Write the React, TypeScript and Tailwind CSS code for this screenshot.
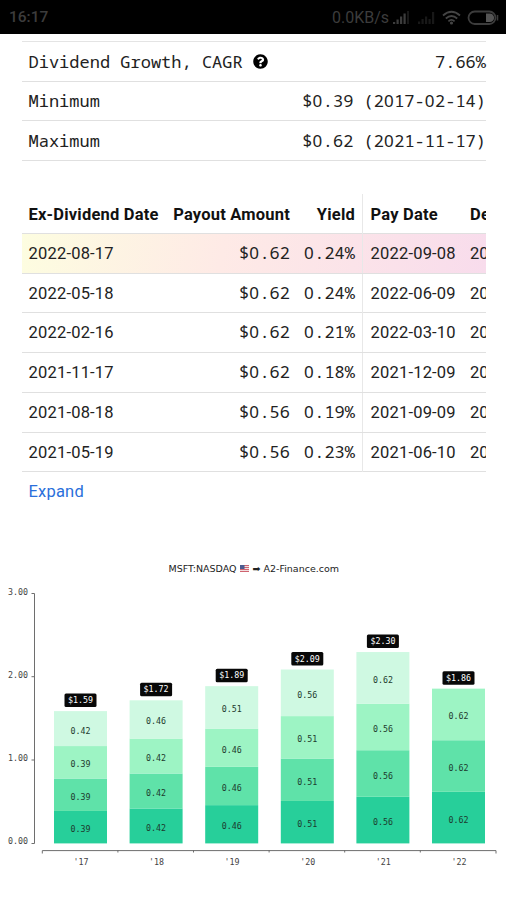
import React from "react";

const MONO = "font-['Noto_Sans_Mono','Noto_Sans_Mono_CJK_SC','Liberation_Mono',monospace]";

// Zeros use the proportional face, spaced to the mono advance, so they carry no slash or dot.
function Mono({ children }: { children: string }) {
  return (
    <span className={`${MONO} text-[17px] whitespace-pre`}>
      {children.split(/(0)/).map((part, i) =>
        part === "0" ? (
          <span key={i} className="font-['Noto_Sans',sans-serif] tracking-[0.480px]">0</span>
        ) : (
          part
        ),
      )}
    </span>
  );
}

function HelpIcon() {
  return (
    <svg className="ml-[10px] h-[15px] w-[15px]" viewBox="0 0 512 512" fill="#000">
      <path d="M504 256c0 137-111 248-248 248S8 393 8 256C8 119.100 119 8 256 8s248 111.100 248 248zM262.700 90c-54.500 0-89.300 23-116.500 63.800-3.500 5.300-2.400 12.400 2.700 16.300l34.700 26.300c5.200 3.900 12.600 3 16.700-2.100 17.900-22.700 30.100-35.800 57.300-35.800 20.400 0 45.700 13.100 45.700 33 0 15-12.400 22.700-32.500 34C247.100 238.500 216 254.900 216 296v4c0 6.600 5.400 12 12 12h56c6.600 0 12-5.400 12-12v-1.300c0-28.500 83.200-29.600 83.200-106.700 0-58-60.200-102-116.500-102zM256 338c-25.400 0-46 20.600-46 46 0 25.400 20.600 46 46 46s46-20.600 46-46c0-25.400-20.600-46-46-46z" />
    </svg>
  );
}

const stats = [
  { label: "Dividend Growth, CAGR", value: "7.66%", help: true },
  { label: "Minimum", value: "$0.39 (2017-02-14)" },
  { label: "Maximum", value: "$0.62 (2021-11-17)" },
];

const payouts = [
  ["2022-08-17", "$0.62", "0.24%", "2022-09-08"],
  ["2022-05-18", "$0.62", "0.24%", "2022-06-09"],
  ["2022-02-16", "$0.62", "0.21%", "2022-03-10"],
  ["2021-11-17", "$0.62", "0.18%", "2021-12-09"],
  ["2021-08-18", "$0.56", "0.19%", "2021-09-09"],
  ["2021-05-19", "$0.56", "0.23%", "2021-06-10"],
];

const COLS = "grid grid-cols-[144px_131px_66px_100px_100px]";

function StatusBar() {
  return (
    <div className="flex h-[34px] items-center justify-between bg-black pt-[2px] pr-[6px] pl-[9px] text-[#3c3c3c]">
      <span className="text-[15.500px] font-medium">16:17</span>
      <div className="flex items-center">
        <span className="text-[16px]">0.0KB/s</span>
        <svg className="ml-[3px]" width="108" height="20" viewBox="0 0 108 20" fill="none">
          <g fill="#3c3c3c">
            <rect x="1" y="14" width="2.200" height="2" />
            <rect x="4.500" y="11.500" width="2.200" height="4.500" />
            <rect x="8" y="8.500" width="2.200" height="7.500" />
            <rect x="11.500" y="5.500" width="2.200" height="10.500" />
          </g>
          <rect x="15" y="3" width="2" height="13" fill="#181818" />
          <g fill="#181818">
            <rect x="26" y="13.500" width="2.200" height="2.500" />
            <rect x="29.500" y="11" width="2.200" height="5" />
            <rect x="33" y="8.500" width="2.200" height="7.500" />
            <rect x="36.500" y="11" width="2.200" height="5" />
            <rect x="40" y="4" width="2.200" height="12" />
          </g>
          <g stroke="#444" strokeWidth="1.800">
            <path d="M51 7.500Q59.500 0 68 7.500" />
            <path d="M53.800 10.500Q59.500 5.500 65.200 10.500" />
            <path d="M56.400 13.300Q59.500 10.500 62.600 13.300" />
          </g>
          <circle cx="59.500" cy="15" r="1.600" fill="#444" />
          <rect x="76.500" y="3.500" width="27" height="12.500" rx="6.200" stroke="#3c3c3c" strokeWidth="1.800" />
          <path d="M94 5.500h3.800a4.300 4.300 0 0 1 0 8.600H94z" fill="#555" />
          <path d="M105.500 7v5.500" stroke="#3c3c3c" strokeWidth="1.500" />
        </svg>
      </div>
    </div>
  );
}

const years = [
  { year: "'17", total: "$1.59", top: "1.59", parts: [0.39, 0.39, 0.39, 0.42] },
  { year: "'18", total: "$1.72", top: "1.72", parts: [0.42, 0.42, 0.42, 0.46] },
  { year: "'19", total: "$1.89", top: "1.89", parts: [0.46, 0.46, 0.46, 0.51] },
  { year: "'20", total: "$2.09", top: "2.09", parts: [0.51, 0.51, 0.51, 0.56] },
  { year: "'21", total: "$2.30", top: "2.30", parts: [0.56, 0.56, 0.56, 0.62] },
  { year: "'22", total: "$1.86", top: "1.86", parts: [0.62, 0.62, 0.62] },
];
const shades = ["#27cf9a", "#5fe2a9", "#9df4c4", "#cff9e2"];
const UNIT = 83.200;
const BASE = 303.400;

function Chart() {
  return (
    <svg
      className="block font-['DejaVu_Sans_Mono',monospace] text-[8.300px]"
      width="506"
      height="360"
      viewBox="0 0 506 360"
    >
      <g className="font-['DejaVu_Sans',sans-serif] text-[9px]" fill="#222">
        <text x="168.500" y="32" textLength="68" lengthAdjust="spacingAndGlyphs">MSFT:NASDAQ</text>
        <text x="252.500" y="32" textLength="86.500" lengthAdjust="spacingAndGlyphs">➡ A2-Finance.com</text>
      </g>
      <g>
        <rect x="240" y="25" width="9" height="7" fill="#f1dfe0" />
        <path d="M240 25.500h9M240 27.500h9M240 29.500h9M240 31.500h9" stroke="#cf6470" />
        <rect x="240" y="25" width="4.500" height="4" fill="#4c5c90" />
      </g>
      <g stroke="#6e6e6e" fill="none">
        <path d="M31.500 53.500h3V303.500h-3M31.500 136.700h3M31.500 220h3" />
        <path d="M42.300 313.500V310.600H496V313.500" />
        {[1, 2, 3, 4, 5].map((i) => (
          <path key={i} d={`M${42.300 + i * 75.600} 310v2.500`} />
        ))}
      </g>
      <g fill="#444">
        {["3.00", "2.00", "1.00", "0.00"].map((v, i) => (
          <text key={v} x="28" y={54.800 + i * 83.200} textAnchor="end">{v}</text>
        ))}
      </g>
      {years.map((y, i) => {
        const cx = 80.500 + i * 75.600;
        let sum = 0;
        const top = BASE - Number(y.top) * UNIT;
        return (
          <g key={y.year} textAnchor="middle">
            {y.parts.map((p, k) => {
              const y0 = BASE - sum * UNIT;
              sum += p;
              const y1 = BASE - sum * UNIT;
              return (
                <g key={k}>
                  <rect x={cx - 26.500} y={y1} width="53" height={y0 - y1} fill={shades[k]} />
                  <text x={cx} y={(y0 + y1) / 2 + 5} fill="#1d3a2e">{p.toFixed(2)}</text>
                </g>
              );
            })}
            <rect x={cx - 16} y={top - 17.500} width="32" height="13.500" rx="1.500" fill="#080808" />
            <text x={cx} y={top - 7.800} fill="#fff">{y.total}</text>
            <text x={cx + 0.400} y="324.500" fill="#444">{y.year}</text>
          </g>
        );
      })}
    </svg>
  );
}

export default function App() {
  return (
    <div className="flex h-[900px] w-[506px] flex-col overflow-hidden bg-white font-[Roboto,sans-serif] text-[#222]">
      <StatusBar />
      <div className="mr-[20px] ml-[22px] mt-[7px] border-t-[1.500px] border-[#e4e4e4]">
        {stats.map((s) => (
          <div key={s.label} className="flex h-[39.700px] items-center justify-between border-b border-[#e0e0e0] pl-[6.500px]">
            <div className="flex items-center">
              <Mono>{s.label}</Mono>
              {s.help && <HelpIcon />}
            </div>
            <Mono>{s.value}</Mono>
          </div>
        ))}
      </div>

      <div className="mr-[20px] ml-[22px] mt-[33px] overflow-hidden text-[16.500px]">
        <div className={`${COLS} h-[40px] items-stretch border-b border-[#e0e0e0] font-bold leading-[41px] tracking-[0.200px] text-[#111] whitespace-nowrap`}>
          <div className="pl-[6.500px]">Ex-Dividend Date</div>
          <div className="pr-[7px] text-right">Payout Amount</div>
          <div className="border-r border-[#e8e8e8] pr-[7px] text-right">Yield</div>
          <div className="pl-[7.500px]">Pay Date</div>
          <div className="pl-[7px]">Declared</div>
        </div>
        {payouts.map((r, i) => (
          <div
            key={r[0]}
            className={`${COLS} h-[39.700px] border-b border-[#e0e0e0] leading-[39px] whitespace-nowrap ${
              i === 0 ? "bg-[linear-gradient(100deg,#fdfde0_0px,#feeae6_200px,#f8dcec_464px)]" : ""
            }`}
          >
            <div className="pl-[6.500px] tracking-[0.2px]">{r[0]}</div>
            <div className="pr-[7px] text-right leading-[37px]"><Mono>{r[1]}</Mono></div>
            <div className="border-r border-[#e8e8e8] pr-[7px] text-right leading-[37px]"><Mono>{r[2]}</Mono></div>
            <div className="pl-[7.500px] tracking-[0.2px]">{r[3]}</div>
            <div className="pl-[7px]">{r[0].slice(0, 4)}</div>
          </div>
        ))}
      </div>
      <a className="mt-[7.500px] ml-[28.500px] text-[16.500px] leading-[24px] tracking-[0.200px] text-[#2a6fdb]">Expand</a>
      <div className="mt-auto">
        <Chart />
      </div>
    </div>
  );
}
